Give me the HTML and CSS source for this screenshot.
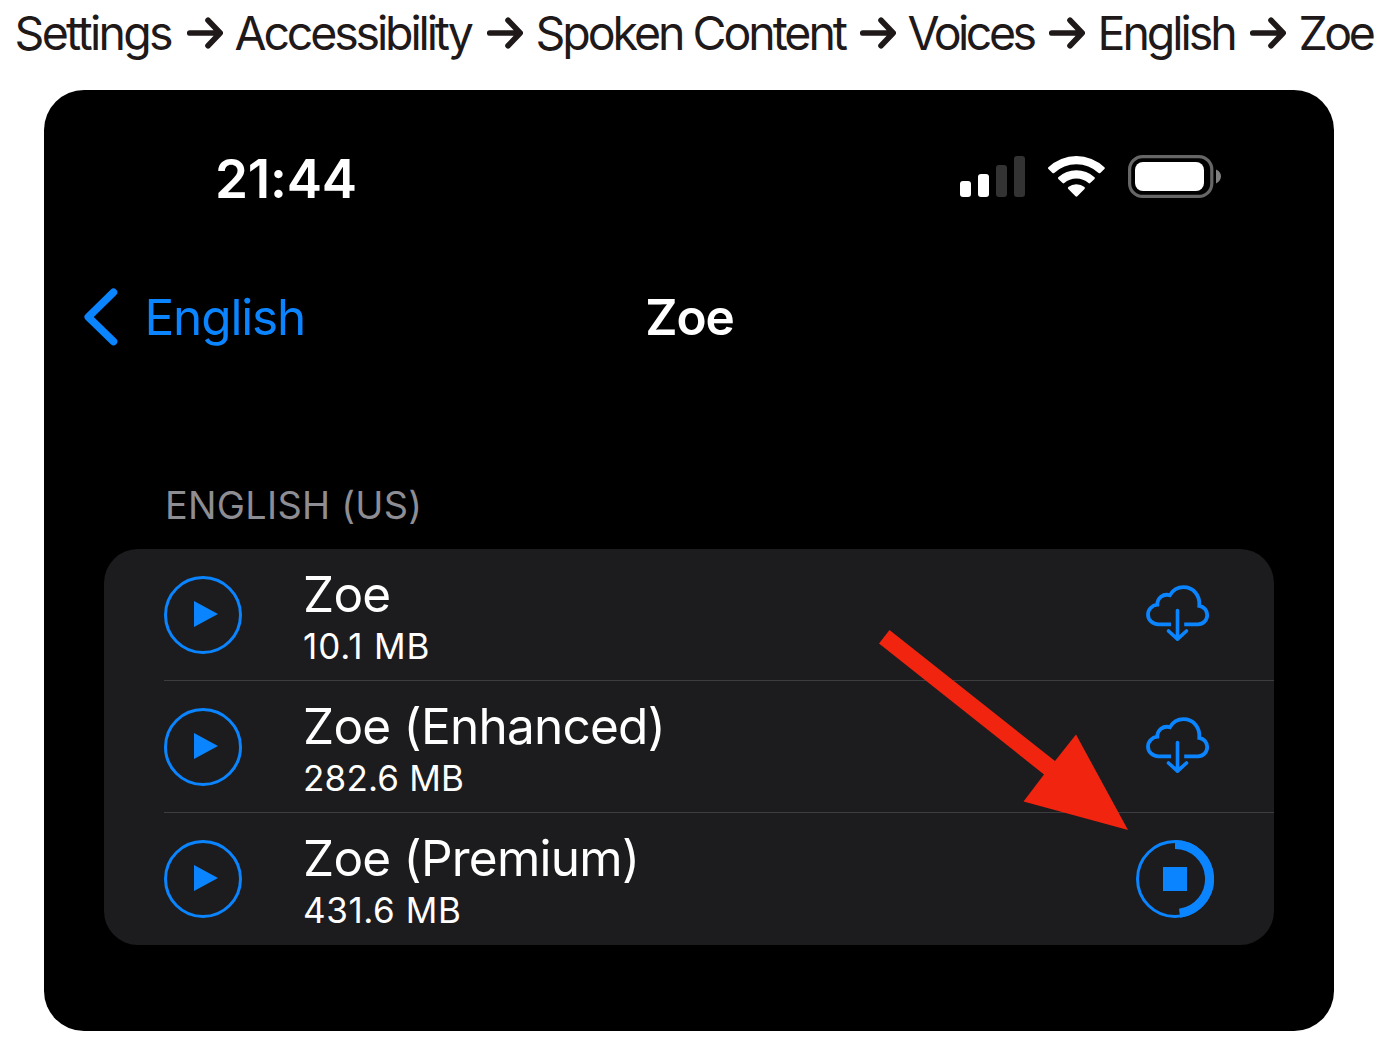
FILE: index.html
```html
<!DOCTYPE html>
<html lang="en">
<head>
<meta charset="utf-8">
<title>Zoe voice settings</title>
<link rel="stylesheet" href="styles.css">
</head>
<body>
<svg class="defs" width="0" height="0">
  <symbol id="arrow" viewBox="0 0 36 32"><path d="M2.700 16H33M21 3.200L33.200 16L21 28.800" fill="none" stroke="currentColor" stroke-width="5.600" stroke-linecap="round" stroke-linejoin="round"/></symbol>
  <symbol id="play" viewBox="0 0 78 78"><circle cx="39" cy="39" r="37.500" fill="none" stroke="currentColor" stroke-width="3"/><path d="M30 25L54 38L30 51Z" fill="currentColor"/></symbol>
  <symbol id="cloud" viewBox="0 0 64 58"><g fill="none" stroke="currentColor" stroke-width="3.800"><path d="M25 39.300H12.500C6.500 39.300 2 35 2 29.500C2 24.500 6 20.300 11.300 19.700C11.300 13 17 8.400 23.800 10.200C27 5 32 2.200 37.500 2.200C47 2.200 54.300 10 53.300 20.800C58 21.600 61.200 25.500 61.200 30C61.200 35.200 57.200 39.300 51.800 39.300H38.200"/><path d="M31.500 25.500V53.500M22.500 46L31.500 54.200L40.500 46" stroke-width="3.600" stroke-linecap="round" stroke-linejoin="round"/></g></symbol>
</svg>
<header class="path">
  <span class="c1">Settings</span><svg><use href="#arrow"/></svg>
  <span class="c2">Accessibility</span><svg><use href="#arrow"/></svg>
  <span class="c3">Spoken Content</span><svg><use href="#arrow"/></svg>
  <span class="c4">Voices</span><svg><use href="#arrow"/></svg>
  <span class="c5">English</span><svg><use href="#arrow"/></svg>
  <span class="c6">Zoe</span>
</header>
<main class="phone">
  <div class="status">
    <span class="time">21:44</span>
    <svg class="indicators" width="264" height="44" viewBox="0 0 264 44">
      <g fill="#fff"><rect x="2" y="27" width="11" height="16" rx="3"/><rect x="20" y="20" width="11" height="23" rx="3"/></g>
      <g fill="#333"><rect x="38" y="11" width="11" height="32" rx="3"/><rect x="56" y="2" width="11" height="41" rx="3"/></g>
      <g fill="#fff"><path d="M90.400 13.200Q89.500 14 90.400 14.900L94.500 18.900Q95.300 19.700 96.200 18.900A32.500 32.500 0 0 1 140.600 18.900Q141.500 19.700 142.300 18.900L146.400 14.900Q147.300 14 146.400 13.200A40.500 40.500 0 0 0 90.400 13.200Z"/><path d="M100.300 23.200Q99.400 24 100.300 24.900L104.600 29Q105.400 29.800 106.300 29A18.500 18.500 0 0 1 130.500 29Q131.400 29.800 132.200 29L136.500 24.900Q137.400 24 136.500 23.200A26.800 26.800 0 0 0 100.300 23.200Z"/><path d="M110.300 33.100Q109.400 34 110.300 34.900L117.500 42.200Q118.400 43.100 119.300 42.200L126.500 34.900Q127.400 34 126.500 33.100A12.800 12.800 0 0 0 110.300 33.100Z"/></g>
      <rect x="171.600" y="2.600" width="82.200" height="39.800" rx="13" fill="none" stroke="#666" stroke-width="3.200"/>
      <rect x="177" y="8" width="69" height="29" rx="8" fill="#fff"/>
      <path d="M258 15.500C261.500 17 263 19.500 263 22.300S261.500 28 258 29.500Z" fill="#808080"/>
    </svg>
  </div>
  <nav class="nav">
    <a class="back"><svg width="34" height="58" viewBox="0 0 34 58"><path d="M29.500 4.300L4.300 29L29.500 53.500" fill="none" stroke="currentColor" stroke-width="7.600" stroke-linecap="round" stroke-linejoin="round"/></svg><span>English</span></a>
    <h1>Zoe</h1>
  </nav>
  <h2 class="label">ENGLISH (US)</h2>
  <ul class="voices">
    <li><svg class="play"><use href="#play"/></svg><div class="info"><b>Zoe</b><small class="s1">10.1 MB</small></div><svg class="cloud"><use href="#cloud"/></svg></li>
    <li><svg class="play"><use href="#play"/></svg><div class="info"><b>Zoe (Enhanced)</b><small class="s2">282.6 MB</small></div><svg class="cloud"><use href="#cloud"/></svg></li>
    <li><svg class="play"><use href="#play"/></svg><div class="info"><b>Zoe (Premium)</b><small class="s3">431.6 MB</small></div>
      <svg class="progress" viewBox="0 0 78 78"><circle cx="39" cy="39" r="37.500" fill="none" stroke="currentColor" stroke-width="3"/><path d="M39 4.500A34.500 34.500 0 0 1 43.600 73.200" fill="none" stroke="currentColor" stroke-width="9"/><path d="M27 27H51V51H27Z" fill="currentColor"/></svg></li>
  </ul>
</main>
<svg class="pointer" width="250" height="202" viewBox="0 0 250 202"><path d="M10.500 0L176 131L197 104.500L249 200L144.500 171.500L165 144.500L0 13.500Z" fill="#f0240f"/></svg>
</body>
</html>
```
FILE: styles.css
```css
* { box-sizing: border-box; }
body { margin: 0; width: 1385px; height: 1046px; overflow: hidden; background: #fff; font-family: Inter, "Liberation Sans", sans-serif; }
.defs { position: absolute; }
.path { display: grid; grid-template-columns: 172px 48px 252px 49px 324px 48px 141px 49px 152px 49px 90px; align-items: center; padding-left: 14.5px; height: 66px; line-height: 66px; font-size: 46.5px; color: #1f1919; white-space: nowrap; }
.path svg { width: 36px; height: 32px; }
.c1 { letter-spacing: -2.7px; }
.c2 { letter-spacing: -3.15px; }
.c3 { letter-spacing: -3.05px; }
.c4 { letter-spacing: -3.5px; }
.c5 { letter-spacing: -3.05px; }
.c6 { letter-spacing: -3.5px; }
.phone { margin: 24px 0 0 44px; width: 1290px; height: 941px; border-radius: 40px; background: #000; color: #fff; padding-top: 54px; }
.status { display: flex; justify-content: space-between; height: 68px; padding: 0 112px 0 171px; }
.time { font-size: 53px; font-weight: 600; line-height: 70px; letter-spacing: -0.2px; }
.indicators { margin-top: 10px; }
.nav { display: grid; grid-template-columns: 562px 166px 562px; height: 70px; margin-top: 70px; line-height: 70px; font-size: 49.5px; }
.back { display: flex; align-items: center; gap: 27px; padding-left: 39.5px; color: #0a84ff; letter-spacing: -1.15px; }
h1 { margin: 0; padding-left: 1px; font-size: 49.5px; font-weight: 600; text-align: center; letter-spacing: -1px; }
.label { margin: 128px 0 0 121px; font-size: 37.8px; font-weight: 400; line-height: 50px; letter-spacing: 0.3px; color: #8d8d93; }
.voices { list-style: none; margin: 19px 60px 0; padding: 0; height: 396px; border-radius: 34px; background: #1c1c1e; }
.voices li { display: flex; align-items: center; height: 132px; margin-left: 60px; }
.voices li + li { box-shadow: 0 -1px #3d3d41; }
.play, .progress { width: 78px; height: 78px; color: #0a84ff; flex: none; }
.info { flex: 1; display: flex; flex-direction: column; height: 132px; margin-left: 61px; padding-top: 15px; white-space: nowrap; }
.info b { font-weight: 400; font-size: 49.5px; line-height: 60px; letter-spacing: -0.75px; }
.info small { font-size: 35px; line-height: 44px; }
.s1 { letter-spacing: 0.9px; }
.s2 { letter-spacing: 0.2px; }
.s3 { letter-spacing: 0.6px; }
.cloud { width: 64px; height: 58px; margin: 0 64px 2px 0; color: #0a84ff; }
.progress { margin-right: 60px; }
.pointer { position: absolute; left: 879px; top: 630px; }
```
